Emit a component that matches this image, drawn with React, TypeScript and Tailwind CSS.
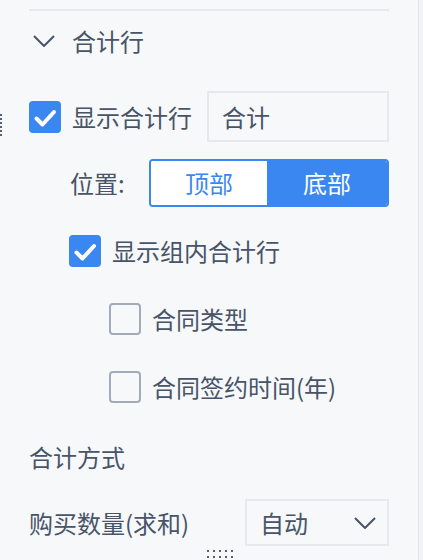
import React from "react";

const Check = () => (
  <svg width="32" height="32" viewBox="0 0 32 32" className="block">
    <rect x="0" y="0" width="32" height="32" rx="4" fill="#3b87f1" />
    <path d="M7.5 17.5 L13.5 23.5 L25 11" fill="none" stroke="#fff" strokeWidth="4" strokeLinecap="round" strokeLinejoin="round" />
  </svg>
);

const Empty = () => (
  <div className="w-[32px] h-[32px] rounded-[4px] border-2 border-[#a3abba] bg-[#f7f8fa] shrink-0" />
);

export default function App() {
  return (
    <div
      className="relative flex w-[423px] h-[560px] overflow-hidden bg-[#f7f8fa] text-[#485468] text-[24px] leading-[32px]"
      style={{ fontFamily: '"Noto Sans CJK SC", "Noto Sans", sans-serif' }}
    >
      <div className="w-[419px] shrink-0 border-r border-[#e4e6ea] pl-[29px] pr-[29px] flex flex-col">
        <div className="mt-[9px] h-[2px] bg-[#e6e8eb]" />
        <div className="h-[60px] flex items-center">
          <svg width="22" height="12" viewBox="0 0 22 12" className="ml-[4px]">
            <path d="M1 1 L11 11 L21 1" fill="none" stroke="#485468" strokeWidth="2" />
          </svg>
          <span className="ml-[17px]">合计行</span>
        </div>
        <div className="mt-[20px] h-[51px] flex items-center">
          <Check />
          <span className="ml-[11px]">显示合计行</span>
          <div className="ml-auto w-[182px] h-[51px] border-2 border-[#e6e8eb] flex items-center pl-[13px]">
            合计
          </div>
        </div>
        <div className="mt-[17px] h-[48px] flex items-center">
          <span className="ml-[41px]">位置:</span>
          <div className="ml-auto w-[240px] h-[48px] border-2 border-[#3b87f1] rounded-[4px] flex overflow-hidden">
            <div className="w-[116px] bg-white text-[#3b87f1] flex items-center justify-center">顶部</div>
            <div className="flex-1 bg-[#3b87f1] text-white flex items-center justify-center">底部</div>
          </div>
        </div>
        <div className="mt-[28px] h-[32px] flex items-center pl-[40px]">
          <Check />
          <span className="ml-[11px]">显示组内合计行</span>
        </div>
        <div className="mt-[36px] h-[32px] flex items-center pl-[80px]">
          <Empty />
          <span className="ml-[11px]">合同类型</span>
        </div>
        <div className="mt-[36px] h-[32px] flex items-center pl-[80px]">
          <Empty />
          <span className="ml-[11px]">合同签约时间(年)</span>
        </div>
        <div className="mt-[38px] h-[32px] flex items-center">合计方式</div>
        <div className="mt-[26px] h-[47px] flex items-center">
          <span>购买数量(求和)</span>
          <div className="ml-auto w-[144px] h-[47px] border-2 border-[#e6e8eb] flex items-center pl-[13px] pr-[11px]">
            <span>自动</span>
            <svg width="22" height="12" viewBox="0 0 22 12" className="ml-auto">
              <path d="M1 1 L11 11 L21 1" fill="none" stroke="#485468" strokeWidth="2" />
            </svg>
          </div>
        </div>
      </div>
      <div className="flex-1 bg-[#f1f3f6]" />
      <div className="absolute left-0 top-[114px] flex flex-col gap-[2px]">
        {[0, 1, 2, 3, 4, 5].map((i) => (
          <div key={i} className="w-[2px] h-[2px] bg-[#56606f]" />
        ))}
      </div>
      <div className="absolute left-[207px] top-[550px] grid grid-cols-5 gap-x-[4px] gap-y-[4px]">
        {Array.from({ length: 10 }).map((_, i) => (
          <div key={i} className="w-[2px] h-[2px] bg-[#56606f]" />
        ))}
      </div>
    </div>
  );
}
